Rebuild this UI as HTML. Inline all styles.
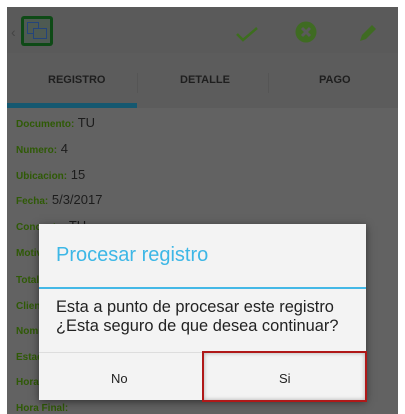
<!DOCTYPE html><html><head><style>
body{margin:0;width:405px;height:414px;background:#fff;position:relative;overflow:hidden;font-family:"Liberation Sans",sans-serif}
.app{position:absolute;left:7px;top:7px;width:391px;height:407px;background:#626262}
.tb{position:absolute;left:0;top:0;width:391px;height:46px;background:#5a5a5a}
.tabs{position:absolute;left:0;top:46px;width:391px;height:55px;background:#5c5c5c}
.tab{position:absolute;top:21px;font-size:11px;font-weight:bold;color:#1e1e1e}
.ind{position:absolute;left:0;top:50px;width:130px;height:5px;background:#155870}
.row{position:absolute;left:9px;font-size:13px;color:#1c1c1c}
.row b{color:#2f5a06;font-size:10px}
.dlg{position:absolute;left:39px;top:224px;width:327px;height:176px;background:#f3f3f3;box-shadow:0 2px 8px rgba(0,0,0,.5)}
</style></head><body>
<div class="app">
<div class="tb">
<div style="position:absolute;left:4px;top:17px;color:#444;font-size:14px">‹</div>
<div style="position:absolute;left:14px;top:9px;width:32px;height:30px;background:#0e4a16;border-radius:3px"></div>
<div style="position:absolute;left:17px;top:12px;width:26px;height:24px;background:#4e5a52"></div>
<div style="position:absolute;left:20px;top:15px;width:10px;height:10px;border:1px solid #24447a"></div>
<div style="position:absolute;left:26px;top:21px;width:12px;height:9px;border:1px solid #24447a;background:#4e5a52"></div>
<svg style="position:absolute;left:228px;top:19px" width="24" height="16"><path d="M2 8l6 6L22 2" stroke="#3d6e1e" stroke-width="2.5" fill="none"/></svg>
<svg style="position:absolute;left:288px;top:14px" width="22" height="22"><circle cx="11" cy="11" r="10.5" fill="#3f6b22"/><path d="M7 7l8 8M15 7l-8 8" stroke="#5a5a5a" stroke-width="3"/></svg>
<svg style="position:absolute;left:350px;top:15px" width="22" height="22"><path d="M3 19l2-6L15 3l4 4L9 17z" fill="#3f6b22"/></svg>
</div>
<div class="tabs">
<div class="tab" style="left:41px">REGISTRO</div>
<div class="tab" style="left:173px">DETALLE</div>
<div class="tab" style="left:312px">PAGO</div>
<div style="position:absolute;left:130px;top:20px;width:1px;height:20px;background:#555"></div>
<div style="position:absolute;left:261px;top:20px;width:1px;height:20px;background:#555"></div>
<div class="ind"></div>
</div>
<div class="row" style="top:108px"><b>Documento:</b> TU</div>
<div class="row" style="top:134px"><b>Numero:</b> 4</div>
<div class="row" style="top:160px"><b>Ubicacion:</b> 15</div>
<div class="row" style="top:185px"><b>Fecha:</b> 5/3/2017</div>
<div class="row" style="top:211px"><b>Concepto:</b> TU</div>
<div class="row" style="top:237px"><b>Motivo:</b></div>
<div class="row" style="top:264px"><b>Total:</b></div>
<div class="row" style="top:290px"><b>Cliente:</b></div>
<div class="row" style="top:315px"><b>Nombre:</b></div>
<div class="row" style="top:341px"><b>Estado:</b></div>
<div class="row" style="top:366px"><b>Hora:</b></div>
<div class="row" style="top:392px"><b>Hora Final:</b></div>
</div>
<div class="dlg">
<div style="position:absolute;left:17px;top:20px;font-size:20px;color:#3db7e6">Procesar registro</div>
<div style="position:absolute;left:0;top:63px;width:327px;height:2px;background:#44b8e6"></div>
<div style="position:absolute;left:17px;top:74px;font-size:16.4px;color:#222;line-height:19px">Esta a punto de procesar este registro<br>¿Esta seguro de que desea continuar?</div>
<div style="position:absolute;left:0;top:128px;width:327px;height:1px;background:#ddd"></div>
<div style="position:absolute;left:72px;top:147px;font-size:13px;color:#222">No</div>
<div style="position:absolute;left:163px;top:127px;width:161px;height:47px;border:2px solid #b01818;box-shadow:inset 0 0 4px rgba(0,0,0,.3)"></div>
<div style="position:absolute;left:240px;top:147px;font-size:13px;color:#222">Si</div>
</div>
</body></html>
